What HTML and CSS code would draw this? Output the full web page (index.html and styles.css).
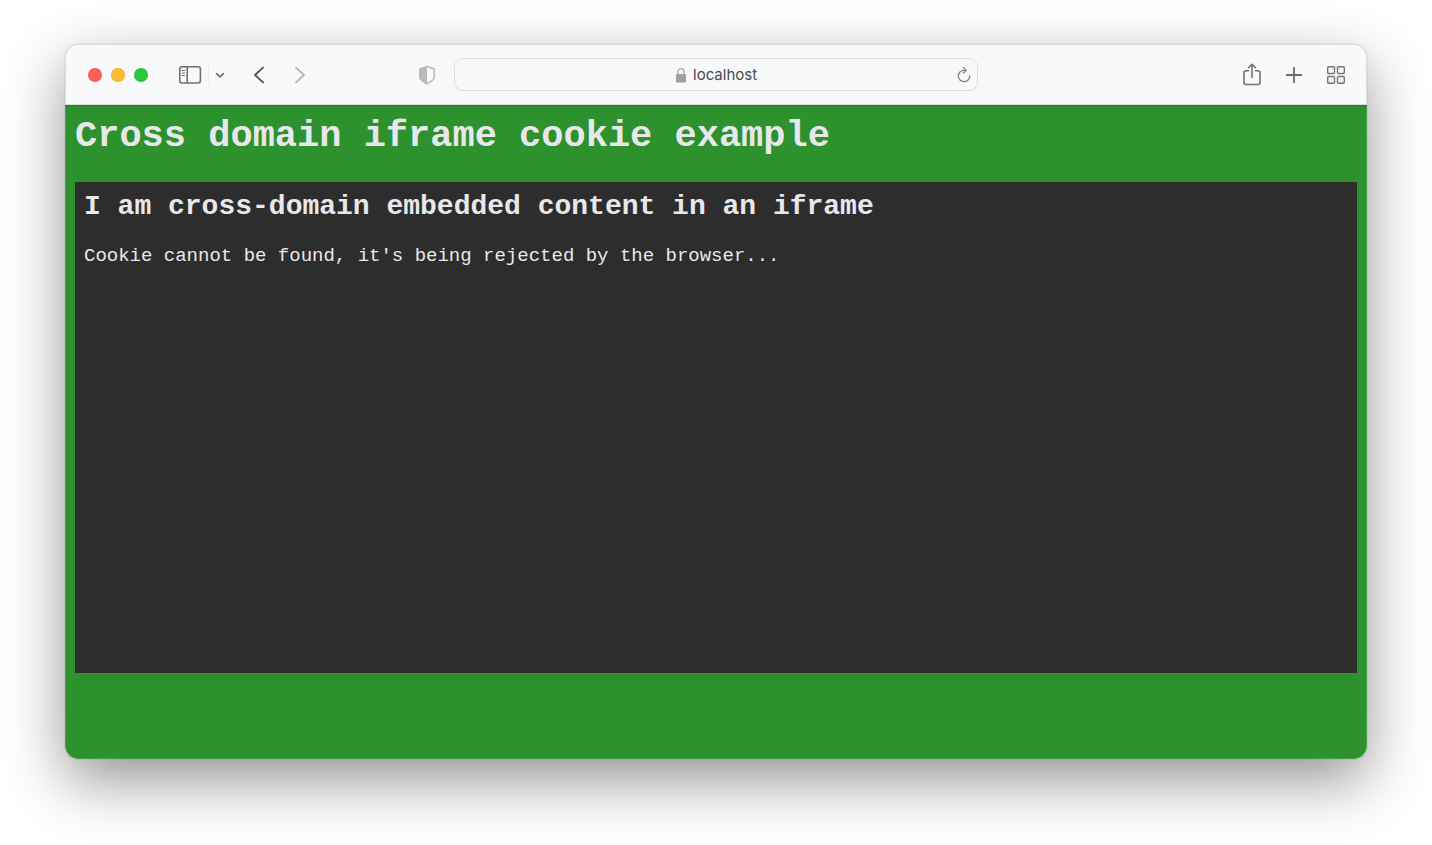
FILE: index.html
```
<!DOCTYPE html>
<html lang="en">
<head>
    <meta charset="UTF-8">
    <meta name="viewport" content="width=device-width, initial-scale=1.0">
    <title>Cross domain iframe cookie example</title>
    <link rel="stylesheet" href="styles.css">
</head>
<body>
    <div class="window">
        <header class="toolbar">
            <div class="toolbar-left">
                <div class="lights">
                    <button class="light close" aria-label="Close"></button>
                    <button class="light minimize" aria-label="Minimize"></button>
                    <button class="light expand" aria-label="Full screen"></button>
                </div>
                <button class="icon-button sidebar" aria-label="Show sidebar">
                    <svg width="24" height="20" viewBox="0 0 24 20" fill="none" stroke="#6f7072" stroke-width="1.6">
                        <rect x="1.8" y="1.8" width="20.6" height="16.2" rx="2.2"/>
                        <path d="M9.2 2v16"/>
                        <path d="M4 5.5h3M4 8h3M4 10.500h3" stroke-width="1.2"/>
                    </svg>
                </button>
                <button class="icon-button menu" aria-label="Tab groups">
                    <svg width="10" height="8" viewBox="0 0 10 8" fill="none" stroke="#707173" stroke-width="1.8" stroke-linecap="round" stroke-linejoin="round">
                        <path d="M1.6 2.6L5 5.800l3.400-3.200"/>
                    </svg>
                </button>
                <div class="history">
                    <button class="icon-button" aria-label="Back">
                        <svg width="12" height="20" viewBox="0 0 12 20" fill="none" stroke="#555658" stroke-width="1.9" stroke-linecap="round" stroke-linejoin="round">
                            <path d="M10 2.600L2 10l8 7.400"/>
                        </svg>
                    </button>
                    <button class="icon-button" aria-label="Forward" disabled>
                        <svg width="12" height="20" viewBox="0 0 12 20" fill="none" stroke="#b5b6b8" stroke-width="1.9" stroke-linecap="round" stroke-linejoin="round">
                            <path d="M2 2.600l8 7.400-8 7.400"/>
                        </svg>
                    </button>
                </div>
                <button class="icon-button shield" aria-label="Privacy report">
                    <svg width="18" height="20" viewBox="0 0 18 20" stroke-linejoin="round">
                        <path d="M9 1.400L16.200 4v8.500c0 2.300-3.300 4.300-7.200 6.200-3.900-1.900-7.200-3.900-7.200-6.200V4z" fill="none" stroke="#b8b9bb" stroke-width="1.600"/>
                        <path d="M9 1.400L1.800 4v8.500c0 2.300 3.300 4.300 7.200 6.200z" fill="#b8b9bb"/>
                    </svg>
                </button>
            </div>

            <div class="address">
                <label class="address-label" for="url" aria-label="Address">
                    <svg width="12" height="16" viewBox="0 0 12 16">
                        <path d="M3 8V5a3 3.400 0 0 1 6 0v3" fill="none" stroke="#a8a9ab" stroke-width="1.300"/>
                        <rect x="1" y="7" width="10" height="8.500" rx="1.300" fill="#a0a1a3"/>
                    </svg>
                </label>
                <input class="address-input" id="url" type="text" value="localhost">
                <button class="icon-button reload" aria-label="Reload">
                    <svg width="14" height="18" viewBox="0 0 14 18" fill="none" stroke="#808183" stroke-width="1.300" stroke-linecap="round" stroke-linejoin="round">
                        <path d="M12.700 9.900A5.700 5.700 0 1 1 7 4.300h1.800"/>
                        <path d="M6.500 1.600L9.200 4.400 6.500 7.100"/>
                    </svg>
                </button>
            </div>

            <div class="toolbar-right">
                <button class="icon-button" aria-label="Share">
                    <svg width="20" height="24" viewBox="0 0 20 24" fill="none" stroke="#707173" stroke-width="1.600" stroke-linecap="round" stroke-linejoin="round">
                        <path d="M6.500 7.800H4A2 2 0 0 0 2 9.800V19.500a2 2 0 0 0 2 2h12a2 2 0 0 0 2-2V9.800a2 2 0 0 0-2-2h-2.500"/>
                        <path d="M10 14.500V1.500M6.500 4.800L10 1.300l3.500 3.500"/>
                    </svg>
                </button>
                <button class="icon-button" aria-label="New tab">
                    <svg width="18" height="18" viewBox="0 0 18 18" fill="none" stroke="#68696b" stroke-width="1.800" stroke-linecap="round">
                        <path d="M9 1.700v14.600M1.700 9h14.600"/>
                    </svg>
                </button>
                <button class="icon-button" aria-label="Tab overview">
                    <svg width="20" height="20" viewBox="0 0 20 20" fill="none" stroke="#737476" stroke-width="1.400">
                        <rect x="1.700" y="1.700" width="6.800" height="6.800" rx="1"/>
                        <rect x="11.500" y="1.700" width="6.800" height="6.800" rx="1"/>
                        <rect x="1.700" y="11.500" width="6.800" height="6.800" rx="1"/>
                        <rect x="11.500" y="11.500" width="6.800" height="6.800" rx="1"/>
                    </svg>
                </button>
            </div>
        </header>

        <main class="page">
            <h1>Cross domain iframe cookie example</h1>
            <section class="embed">
                <h2>I am cross-domain embedded content in an iframe</h2>
                <p>Cookie cannot be found, it's being rejected by the browser...</p>
            </section>
        </main>
    </div>
</body>
</html>
```
FILE: styles.css
```
* {
    box-sizing: border-box;
}
body {
    display: flex;
    min-height: 100vh;
    margin: 0;
    padding: 44px 65px 86px;
    background: #fff;
}
.window {
    display: flex;
    flex: 1;
    flex-direction: column;
    min-width: 0;
    overflow: hidden;
    border-radius: 13px;
    background: #f8f9fb;
    box-shadow: 0 0 1px rgba(0, 0, 0, 0.4), 0 22px 60px rgba(0, 0, 0, 0.42);
}

/* Toolbar */
.toolbar {
    display: grid;
    grid-template-columns: 1fr 524px 1fr;
    align-items: center;
    height: 61px;
    background: #f8f9fb;
    border: 1px solid #d9dcdd;
    border-radius: 13px 13px 0 0;
}
.toolbar-left {
    display: flex;
    align-items: center;
    padding: 0 18px 0 22px;
}
.icon-button {
    display: flex;
    padding: 0;
    border: none;
    background: none;
}
.lights {
    display: flex;
    gap: 9px;
}
.light {
    width: 14px;
    height: 14px;
    padding: 0;
    border: 1px solid rgba(0, 0, 0, 0.06);
    border-radius: 50%;
}
.close {
    background: #ff5f57;
}
.minimize {
    background: #febc2e;
}
.expand {
    background: #28c840;
}
.sidebar {
    margin-left: 30px;
}
.menu {
    align-items: center;
    height: 21px;
    margin-left: 6px;
    padding-left: 6px;
    border-left: 1px solid #ecedef;
}
.history {
    display: flex;
    gap: 29px;
    margin-left: 28px;
}
.shield {
    margin-left: auto;
}
.address {
    display: flex;
    position: relative;
    align-items: center;
    justify-content: center;
    gap: 6px;
    height: 33px;
    border: 1px solid #dcdddf;
    border-radius: 9px;
}
.address-label {
    display: flex;
}
.address-input {
    width: 64px;
    height: 24px;
    padding: 0;
    border: none;
    outline: none;
    background: none;
    color: #48494b;
    font: 15px Inter, "Liberation Sans", sans-serif;
}
.reload {
    position: absolute;
    right: 6px;
}
.toolbar-right {
    display: flex;
    align-items: center;
    justify-content: flex-end;
    gap: 23px;
    padding-right: 20px;
}

/* Page content */
.page {
    display: flex;
    flex: 1;
    flex-direction: column;
    padding: 9px 9px 85px;
    border: 1px solid #459f45;
    border-top-color: #26802a;
    border-radius: 0 0 13px 13px;
    background: #2d922d;
    color: #e8e8ec;
    font-family: "Liberation Mono", "Courier New", monospace;
}
h1 {
    margin: 0 0 25px;
    font-size: 37px;
    line-height: 42px;
}
.embed {
    flex: 1;
    padding: 9px;
    background: #2d2d2d;
}
h2 {
    margin: 0 0 22px;
    font-size: 28px;
    line-height: 32px;
}
p {
    margin: 0;
    font-size: 19px;
    line-height: 22px;
}
```
